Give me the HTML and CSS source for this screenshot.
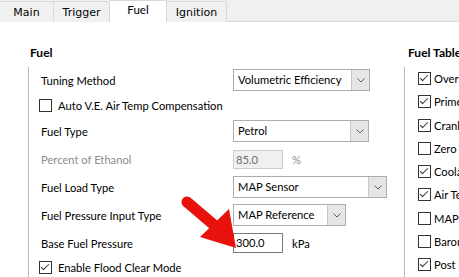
FILE: index.html
```html
<!DOCTYPE html>
<html lang="en">
<head>
  <meta charset="UTF-8" />
  <title>Fuel Settings</title>
  <link rel="stylesheet" href="styles.css">
</head>
<body>

  <div class="tabs">
    <div class="tab">Main</div>
    <div class="tab">Trigger</div>
    <div class="tab active">Fuel</div>
    <div class="tab">Ignition</div>
  </div>

  <div class="page">
    <section class="group fuel">
      <h2>Fuel</h2>
      <div class="group-body">
        <div class="row first">
          <span class="label">Tuning Method</span>
          <div class="combo w137"><span>Volumetric Efficiency</span><i class="drop"><svg width="8" height="5" viewBox="0 0 8 5"><polyline points="0.5,0.5 4,4 7.5,0.5" /></svg></i></div>
        </div>
        <div class="row second">
          <label class="check"><span class="box"></span>Auto V.E. Air Temp Compensation</label>
        </div>
        <div class="row">
          <span class="label">Fuel Type</span>
          <div class="combo w136"><span>Petrol</span><i class="drop"><svg width="8" height="5" viewBox="0 0 8 5"><polyline points="0.5,0.5 4,4 7.5,0.5" /></svg></i></div>
        </div>
        <div class="row">
          <span class="label disabled">Percent of Ethanol</span>
          <div class="textbox disabled">85.0</div>
          <span class="unit disabled">%</span>
        </div>
        <div class="row">
          <span class="label">Fuel Load Type</span>
          <div class="combo w154"><span>MAP Sensor</span><i class="drop"><svg width="8" height="5" viewBox="0 0 8 5"><polyline points="0.5,0.5 4,4 7.5,0.5" /></svg></i></div>
        </div>
        <div class="row">
          <span class="label">Fuel Pressure Input Type</span>
          <div class="combo w113"><span>MAP Reference</span><i class="drop"><svg width="8" height="5" viewBox="0 0 8 5"><polyline points="0.5,0.5 4,4 7.5,0.5" /></svg></i></div>
        </div>
        <div class="row">
          <span class="label">Base Fuel Pressure</span>
          <div class="textbox">300.0</div>
          <span class="unit">kPa</span>
        </div>
        <div class="row last">
          <label class="check"><span class="box checked"></span>Enable Flood Clear Mode</label>
        </div>
      </div>
    </section>

    <section class="group tables">
      <h2>Fuel Tables</h2>
      <div class="group-body">
        <label class="check item"><span class="box checked"></span>Overrun Fuel Cut</label>
        <label class="check item"><span class="box checked"></span>Prime Pulse</label>
        <label class="check item"><span class="box checked"></span>Cranking Enrichment</label>
        <label class="check item"><span class="box"></span>Zero Throttle Fuel</label>
        <label class="check item"><span class="box checked"></span>Coolant Temp Correction</label>
        <label class="check item"><span class="box checked"></span>Air Temp Correction</label>
        <label class="check item"><span class="box"></span>MAP Correction</label>
        <label class="check item"><span class="box"></span>Barometric Correction</label>
        <label class="check item"><span class="box checked"></span>Post Start Enrichment</label>
      </div>
    </section>
  </div>

  <svg class="arrow" width="459" height="277" viewBox="0 0 459 277">
    <line x1="187" y1="202" x2="214" y2="225" />
    <polygon points="200,237 229,209 236,248" />
  </svg>

</body>
</html>
```

FILE: styles.css
```css
body {
  margin: 0;
  width: 459px;
  height: 277px;
  overflow: hidden;
  position: relative;
  background: #fff;
  font-family: Lato, 'Noto Sans', sans-serif;
  font-size: 11.2px;
  color: #000;
}

.tabs {
  display: flex;
  height: 21px;
  background: #f0f0f0;
  border-bottom: 1px solid #d9d9d9;
  font-family: 'DejaVu Sans', sans-serif;
  font-size: 11px;
}

.tab {
  width: 53px;
  height: 20px;
  margin-top: 1px;
  border: 1px solid #d9d9d9;
  border-bottom: none;
  border-left: none;
  display: flex;
  align-items: center;
  justify-content: center;
  background: #f0f0f0;
  color: #000;
}

.tab:nth-child(2) {
  width: 55px;
}

.tab:nth-child(4) {
  width: 59px;
}

.tab.active {
  width: 57px;
  height: 22px;
  margin-top: 0;
  margin-bottom: -1px;
  background: #fff;
  align-items: flex-start;
  padding-top: 2px;
  box-sizing: border-box;
  font-family: Lato, sans-serif;
  font-size: 11.5px;
}

.page {
  display: flex;
  padding-left: 28px;
}

.group h2 {
  margin: 23px 0 6px;
  height: 16px;
  line-height: 16px;
  font-size: 12px;
  font-weight: bold;
}

.group-body {
  border-left: 1px solid #b9b9b9;
}

.fuel {
  width: 376px;
  flex: none;
}

.fuel h2 {
  padding-left: 2px;
}

.fuel .group-body {
  padding-left: 12px;
}

.tables {
  width: 55px;
  flex: none;
  overflow: hidden;
  white-space: nowrap;
}

.tables h2 {
  padding-left: 4px;
}

.tables .group-body {
  padding-left: 13px;
  height: 220px;
}

.row {
  display: flex;
  align-items: center;
  height: 28px;
}

.row.first {
  height: 26px;
}

.row.second {
  height: 24px;
}

.row.last {
  height: 20px;
}

.label {
  width: 192px;
  flex: none;
}

.disabled {
  color: #8d8d8d;
}

.combo {
  height: 22px;
  box-sizing: border-box;
  border: 1px solid #adadad;
  background: #fff;
  display: flex;
  align-items: stretch;
}

.combo span {
  flex: 1;
  padding-left: 4px;
  line-height: 20px;
  white-space: nowrap;
  overflow: hidden;
}

.w137 { width: 137px; }
.w136 { width: 136px; }
.w154 { width: 154px; }
.w113 { width: 113px; }

.drop {
  width: 17px;
  flex: none;
  background: #e5e5e5;
  border-left: 1px solid #c8c8c8;
  display: flex;
  align-items: center;
  justify-content: center;
}

.drop polyline {
  fill: none;
  stroke: #606060;
  stroke-width: 1;
}

.textbox {
  width: 50px;
  height: 20px;
  box-sizing: border-box;
  border: 1px solid #7a7a7a;
  padding-left: 2px;
  line-height: 18px;
}

.textbox.disabled {
  height: 19px;
  background: #f0f0f0;
  border-color: #cccccc;
  color: #6d6d6d;
  line-height: 17px;
}

.unit {
  margin-left: 9px;
}

.check {
  display: flex;
  align-items: center;
  margin-left: -2px;
}

.box {
  width: 13px;
  height: 13px;
  box-sizing: border-box;
  border: 1px solid #333;
  background: #fff;
  margin-right: 6px;
  position: relative;
  flex: none;
}

.box.checked::after {
  content: "";
  position: absolute;
  left: 3px;
  top: 0px;
  width: 3px;
  height: 7px;
  border: solid #333;
  border-width: 0 1px 1px 0;
  transform: rotate(45deg);
}

.tables .check {
  margin-left: 0;
  height: 23.25px;
}

.tables .box {
  margin-right: 3px;
}

.arrow {
  position: absolute;
  left: 0;
  top: 0;
  pointer-events: none;
}

.arrow line {
  stroke: #e8120c;
  stroke-width: 11;
  stroke-linecap: round;
}

.arrow polygon {
  fill: #e8120c;
}
```
